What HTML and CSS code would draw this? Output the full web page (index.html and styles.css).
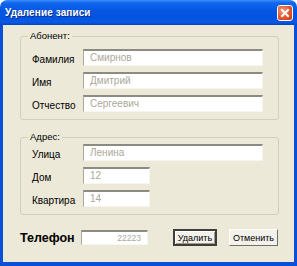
FILE: index.html
```html
<!DOCTYPE html>
<html>
<head>
<meta charset="utf-8">
<link rel="stylesheet" href="styles.css">
</head>
<body>
<div class="window">
  <div class="titlebar">
    <span class="title">Удаление записи</span>
    <span class="close">
      <svg width="14" height="14" viewBox="0 0 14 14"><path d="M4 4 L10 10 M10 4 L4 10" stroke="#fff" stroke-width="2" stroke-linecap="square"/></svg>
    </span>
  </div>
  <div class="body">
    <fieldset class="group g1">
      <legend>Абонент:</legend>
      <div class="row"><span class="lbl">Фамилия</span><span class="field wide">Смирнов</span></div>
      <div class="row"><span class="lbl">Имя</span><span class="field wide">Дмитрий</span></div>
      <div class="row"><span class="lbl">Отчество</span><span class="field wide">Сергеевич</span></div>
    </fieldset>
    <fieldset class="group g2">
      <legend>Адрес:</legend>
      <div class="row"><span class="lbl">Улица</span><span class="field wide">Ленина</span></div>
      <div class="row"><span class="lbl">Дом</span><span class="field short">12</span></div>
      <div class="row"><span class="lbl">Квартира</span><span class="field short">14</span></div>
    </fieldset>
    <div class="bottom">
      <span class="phone-lbl">Телефон</span>
      <span class="field phone">22223</span>
      <span class="btn default">Удалить</span>
      <span class="btn cancel">Отменить</span>
    </div>
  </div>
</div>
</body>
</html>
```
FILE: styles.css
```css
html, body {
  margin: 0;
  padding: 0;
  background: #ffffff;
}
.window {
  width: 297px;
  height: 266px;
  display: flex;
  flex-direction: column;
  font-family: "Liberation Sans", Arial, sans-serif;
  font-size: 10px;
  color: #000;
}
.titlebar {
  height: 25px;
  flex: none;
  display: flex;
  align-items: center;
  justify-content: space-between;
  padding: 0 4px 0 5px;
  border-radius: 7px 7px 0 0;
  background: linear-gradient(to bottom, #3C8CF8 0%, #1166EE 12%, #0558E4 40%, #0453DE 70%, #0A5AE6 88%, #0044C8 100%);
}
.title {
  color: #fff;
  font-weight: bold;
  font-size: 10px;
  letter-spacing: 0.1px;
  text-shadow: 1px 1px 0 #0A2D8A;
}
.close {
  width: 14px;
  height: 14px;
  border: 1px solid #ffffff;
  border-radius: 3px;
  background: radial-gradient(circle at 35% 35%, #F39A7C 0%, #E2562E 55%, #C7391A 100%);
  display: flex;
}
.body {
  flex: 1;
  background: #ECE9D8;
  border-left: 3px solid #0A4FD8;
  border-right: 3px solid #0A4FD8;
  border-bottom: 4px solid #0A4FD8;
  padding: 5px 15px 0 17px;
  display: flex;
  flex-direction: column;
}
.group {
  margin: 0;
  border: 1px solid #D0D0BF;
  border-radius: 3px;
  padding: 0 0 0 11px;
  display: flex;
  flex-direction: column;
  gap: 6px;
}
.group legend {
  padding: 0 2px;
  margin-left: -4px;
  line-height: 12px;
  font-size: 9.5px;
}
.g1 {
  padding-top: 7px;
  padding-bottom: 7px;
}
.g2 {
  margin-top: 11px;
  padding-top: 1px;
  padding-bottom: 7px;
}
.row {
  display: flex;
  align-items: center;
  height: 17px;
}
.lbl {
  width: 51px;
  flex: none;
  font-size: 10px;
  padding-top: 4px;
}
.field {
  box-sizing: border-box;
  height: 17px;
  background: #fff;
  border-style: solid;
  border-width: 2px 1px 1px 1px;
  border-color: #8C8B82 #F6F5EF #F6F5EF #ACA899;
  color: #ACA899;
  font-size: 10px;
  line-height: 14px;
  padding: 0 6px;
}
.wide { width: 180px; }
.short { width: 67px; }
.bottom {
  margin-top: 14px;
  display: flex;
  align-items: center;
  height: 17px;
}
.phone-lbl {
  font-size: 12.5px;
  font-weight: bold;
  width: 61px;
  flex: none;
}
.phone {
  width: 67px;
  height: 15px;
  line-height: 12px;
  text-align: right;
  font-size: 8.5px;
  padding-right: 6px;
}
.btn {
  box-sizing: border-box;
  height: 17px;
  display: flex;
  align-items: center;
  justify-content: center;
  font-size: 9px;
  background: #F3F1EA;
  border: 1px solid;
  border-color: #FFFFFF #716F64 #716F64 #FFFFFF;
}
.default {
  width: 44px;
  margin-left: 25px;
  border: 2px solid #3F3E38;
  box-shadow: inset 1px 1px 0 #fff, inset -1px -1px 0 #9D9B8E;
}
.cancel {
  width: 49px;
  margin-left: 12px;
}
```
